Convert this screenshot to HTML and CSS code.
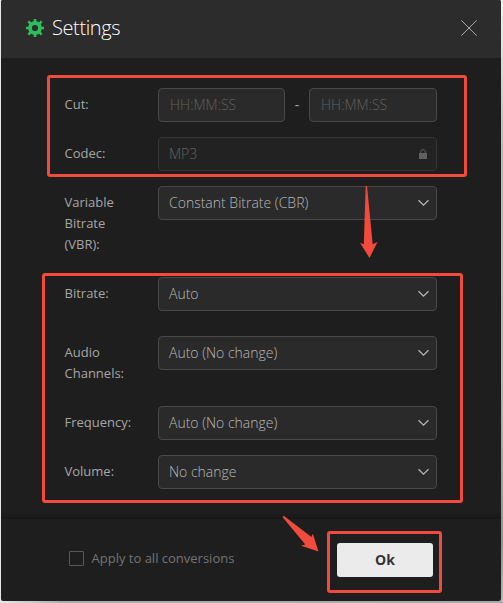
FILE: index.html
```html
<!DOCTYPE html>
<html lang="en">
<head>
<meta charset="utf-8">
<title>Settings</title>
<link rel="stylesheet" href="styles.css">
</head>
<body>
<svg class="defs" width="0" height="0"><symbol id="chevron" viewBox="0 0 12 8"><path d="M1.500 1.200 6.500 6.200 11.500 1.200" fill="none" stroke="#b4b4b4" stroke-width="1.3"/></symbol></svg>
<main class="modal">
  <header class="header">
    <svg class="gear" viewBox="0 0 18 18" width="18" height="18">
      <circle cx="9" cy="9" r="5" fill="none" stroke="#2fbd5b" stroke-width="3.800"/>
      <path d="M9 0v3.500M9 14.500v3.500M0 9h3.500M14.500 9h3.500M2.300 2.300l2.500 2.500M13.200 13.200l2.500 2.500M2.300 15.700l2.500-2.500M13.200 4.800l2.500-2.500" stroke="#2fbd5b" stroke-width="2.600"/>
    </svg>
    <h1 class="title">Settings</h1>
    <svg class="close" viewBox="0 0 16 16" width="16" height="16"><path d="M.3.3 15.7 15.7M15.7.3.3 15.7" stroke="#a8a8a8" stroke-width="1"/></svg>
  </header>
  <section class="form">
    <div class="row">
      <div class="label">Cut:</div>
      <div class="range">
        <div class="field placeholder">HH:MM:SS</div>
        <span class="dash">-</span>
        <div class="field placeholder">HH:MM:SS</div>
      </div>
    </div>
    <div class="row">
      <div class="label">Codec:</div>
      <div class="field locked"><span>MP3</span><svg class="lock" viewBox="0 0 8 10" width="8" height="10"><path d="M0 4h8v6H0z" fill="#606060"/><path d="M1.6 4.5V3a2.4 2.4 0 0 1 4.8 0v1.5" fill="none" stroke="#606060" stroke-width="1"/></svg></div>
    </div>
    <div class="row">
      <div class="label">Variable Bitrate (VBR):</div>
      <div class="field"><span>Constant Bitrate (CBR)</span><svg class="chevron"><use href="#chevron"/></svg></div>
    </div>
    <div class="row spaced">
      <div class="label">Bitrate:</div>
      <div class="field"><span>Auto</span><svg class="chevron"><use href="#chevron"/></svg></div>
    </div>
    <div class="row">
      <div class="label">Audio Channels:</div>
      <div class="field"><span>Auto (No change)</span><svg class="chevron"><use href="#chevron"/></svg></div>
    </div>
    <div class="row">
      <div class="label">Frequency:</div>
      <div class="field"><span>Auto (No change)</span><svg class="chevron"><use href="#chevron"/></svg></div>
    </div>
    <div class="row">
      <div class="label">Volume:</div>
      <div class="field"><span>No change</span><svg class="chevron"><use href="#chevron"/></svg></div>
    </div>
  </section>
  <footer class="footer">
    <div class="apply"><span class="checkbox"></span><span class="apply-text">Apply to all conversions</span></div>
    <div class="ok">Ok</div>
  </footer>
</main>
<div class="mark mark-source"></div>
<div class="mark mark-audio"></div>
<div class="mark mark-ok"></div>
<svg class="arrows" viewBox="0 0 503 603" width="503" height="603">
  <path fill="#f24a3d" d="M365.700 186h1.300l5.700 58.300 4.800-2.300-8 16-9.500-15.200 3.800 1.500z"/>
  <path fill="#f24a3d" d="M282.500 517l1.200-1.200 27.800 21.200 1.300-3.200 5.700 17.700-17.500-5.700 4.300-1.300z"/>
</svg>
</body>
</html>
```
FILE: styles.css
```css
* { box-sizing: border-box; }
html { height: 603px; }
body {
  margin: 0;
  width: 503px;
  height: 603px;
  padding: 0 2px 2px 1px;
  overflow: hidden;
  background: linear-gradient(#f4f4f4 0, #b8b8b8 150px, #b4b4b4 390px, #929292 540px, #b5b5b5 603px) right / 2px 100% no-repeat,
    linear-gradient(90deg, #e8e8e8 0, #adadad 60px, #a9a9a9 100%) bottom / 100% 2px no-repeat,
    #e6e6e6;
  font-family: "Open Sans", sans-serif;
  color: #a6a6a6;
}
.defs { position: absolute; }
.modal {
  display: flex;
  flex-direction: column;
  height: 601px;
  background: #1e1e1e;
  border-radius: 2px;
  overflow: hidden;
}
.header {
  display: flex;
  align-items: center;
  height: 58px;
  flex: none;
  padding: 0 24px 2px 25px;
  background: #2c2c2c;
}
.title {
  margin: 0 auto 0 8px;
  font-size: 20px;
  line-height: 28px;
  font-weight: 300;
  letter-spacing: -0.4px;
  color: #fff;
}
.form {
  display: flex;
  flex-direction: column;
  gap: 15px;
  flex: 1;
  padding: 30px 64px 0 63px;
  background: linear-gradient(transparent, #171717) bottom / 100% 6px no-repeat;
}
.row { display: flex; align-items: flex-start; }
.spaced { margin-bottom: 10px; }
.label {
  width: 94px;
  padding: 6px 20px 7px 0.5px;
  font-size: 13px;
  line-height: 21px;
}
.field {
  display: flex;
  align-items: center;
  justify-content: space-between;
  flex: 1;
  height: 34px;
  padding: 0 7px 0 10px;
  border: 1px solid #484848;
  border-radius: 4px;
  background: #2a2a2a;
  font-size: 14px;
  line-height: 20px;
  font-weight: 300;
  color: #b8b8b8;
}
.range { display: flex; flex: 1; }
.range .field { flex: none; width: 127px; }
.range .field:last-child { width: 128px; }
.placeholder { padding-left: 11px; color: #606060; }
.dash { width: 24px; line-height: 33px; font-size: 14px; text-align: center; }
.locked { padding-right: 9px; background: #222; border-color: #353535; color: #626262; }
.chevron { width: 12px; height: 8px; }
.footer {
  display: flex;
  align-items: flex-start;
  justify-content: space-between;
  height: 82px;
  flex: none;
  padding: 24px 68px 0;
}
.apply { display: flex; align-items: center; gap: 7.5px; padding-top: 5px; }
.checkbox { width: 15px; height: 15px; margin-top: 1px; border: 1px solid #585858; border-radius: 1px; }
.apply-text { font-size: 13px; line-height: 20px; color: #747474; }
.ok {
  width: 96px;
  height: 34px;
  border-radius: 3px;
  background: #ebebeb;
  color: #333;
  font-size: 14px;
  font-weight: 700;
  line-height: 34px;
  text-align: center;
}
.mark { position: absolute; border: 3px solid #f24a3d; border-radius: 3px; }
.mark-source { left: 47px; top: 75px; width: 420px; height: 102px; }
.mark-audio { left: 42px; top: 273px; width: 421px; height: 230px; }
.mark-ok { left: 327px; top: 531px; width: 115px; height: 62px; }
.arrows { position: absolute; left: 0; top: 0; }
```
